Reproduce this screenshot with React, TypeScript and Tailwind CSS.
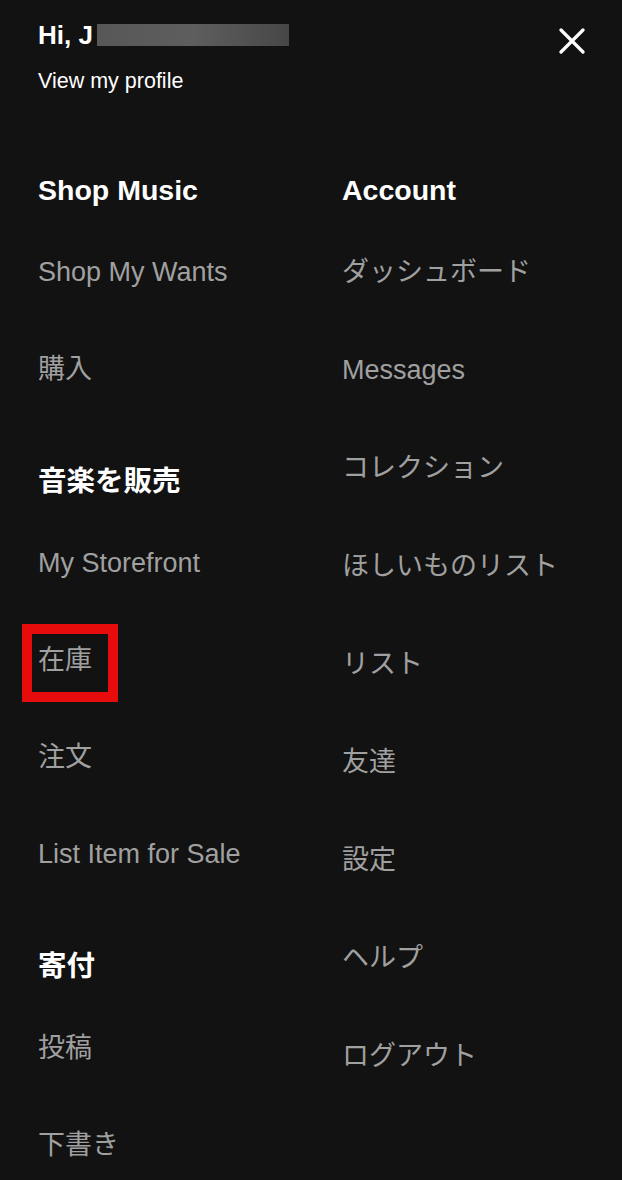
const font = { fontFamily: '"Liberation Sans", "Noto Sans CJK JP", sans-serif' };

const shop = ["Shop My Wants", "購入"];
const sell = ["My Storefront", "在庫", "注文", "List Item for Sale"];
const donate = ["投稿", "下書き"];
const account = [
  "ダッシュボード",
  "Messages",
  "コレクション",
  "ほしいものリスト",
  "リスト",
  "友達",
  "設定",
  "ヘルプ",
  "ログアウト",
];

function Heading({ label, className = "" }: { label: string; className?: string }) {
  return (
    <div className={`flex h-[66px] items-center text-[28.5px] font-bold text-white ${className}`}>
      {label}
    </div>
  );
}

function Item({ label, tall, marked }: { label: string; tall?: boolean; marked?: boolean }) {
  return (
    <div className={`flex items-center text-[27px] text-[#a0a0a0] ${tall ? "h-[98px]" : "h-[97px]"}`}>
      <span className="relative leading-9">
        {label}
        {marked && (
          <span className="absolute -left-4 -top-[18px] h-[78px] w-24 border-[10px] border-[#e60c0c]" />
        )}
      </span>
    </div>
  );
}

export default function App() {
  return (
    <div className="min-h-[1180px] w-full bg-[#121212] pl-[38px]" style={font}>
      <div className="flex items-start justify-between pt-[20px] pr-[37px]">
        <div>
          <div className="flex items-center text-[26px] font-bold leading-[30px] text-white">
            Hi, J
            <span className="ml-[4px] inline-block h-[22px] w-[192px] bg-gradient-to-r from-[#575757] via-[#5e5e5e] to-[#474747]" />
          </div>
          <div className="mt-[19px] text-[21.5px] leading-6 text-white">View my profile</div>
        </div>
        <svg width="26" height="26" viewBox="0 0 26 26" className="mt-[8px]">
          <path d="M2 2L24 24M24 2L2 24" stroke="white" strokeWidth="3.2" strokeLinecap="round" />
        </svg>
      </div>

      <div className="mt-[64px] grid grid-cols-[304px_1fr]">
        <div>
          <Heading label="Shop Music" />
          {shop.map((s) => (
            <Item key={s} label={s} />
          ))}
          <Heading label="音楽を販売" className="mt-[31px]" />
          {sell.map((s) => (
            <Item key={s} label={s} marked={s === "在庫"} />
          ))}
          <Heading label="寄付" className="mt-[31px]" />
          {donate.map((s) => (
            <Item key={s} label={s} />
          ))}
        </div>
        <div>
          <Heading label="Account" />
          {account.map((s) => (
            <Item key={s} label={s} tall />
          ))}
        </div>
      </div>
    </div>
  );
}
